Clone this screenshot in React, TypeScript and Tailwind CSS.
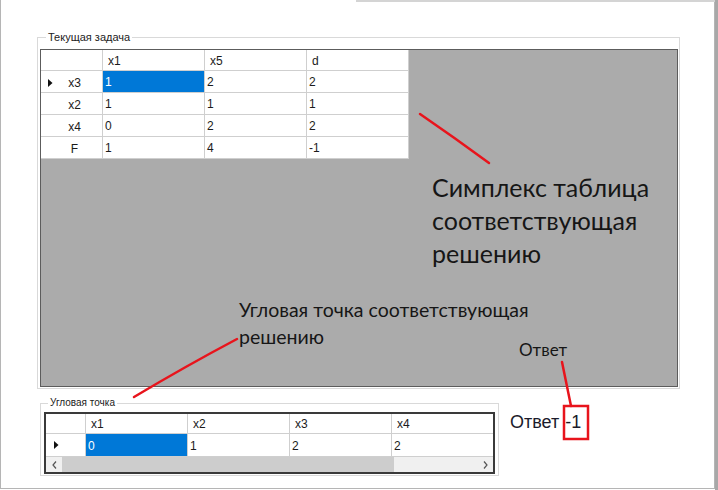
import React from "react"

const topCols = ["x1", "x5", "d"]
const topRows = [
  { name: "x3", vals: ["1", "2", "2"], current: true },
  { name: "x2", vals: ["1", "1", "1"] },
  { name: "x4", vals: ["0", "2", "2"] },
  { name: "F", vals: ["1", "4", "-1"] },
]

const pointCols = ["x1", "x2", "x3", "x4"]
const pointVals = ["0", "1", "2", "2"]

const line = "border-r border-b border-[#cfcfcf] bg-white"

function RowMark() {
  return (
    <svg width="5" height="8" viewBox="0 0 5 8">
      <path d="M0 0 L4.5 4 L0 8 Z" fill="#111" />
    </svg>
  )
}

export default function App() {
  return (
    <div className="relative flex w-[718px] h-[490px] bg-white overflow-hidden font-['Liberation_Sans',Arial,sans-serif] text-[#1b1b1b]">
      <div className="flex flex-col w-[715px] h-[489px] border-l border-r border-b border-[#b5b5b5]">
        <fieldset className="ml-[36px] mt-[31px] w-[643px] border border-[#d9d9d9] pb-[1px]">
          <legend className="ml-[8px] px-[2px] text-[11px] leading-[13px] text-[#222]">Текущая задача</legend>
          <div className="ml-[2px] mt-[5px] w-[638px] h-[338px] border border-[#5c5c5c] bg-[#ababab]">
            <div className="grid grid-cols-[62px_102px_102px_102px] grid-rows-[21px_22px_22px_22px_22px] w-[368px] text-[12px]">
              <div className={line} />
              {topCols.map((c) => (
                <div key={c} className={`${line} flex items-center pl-[5px] pt-[1px]`}>{c}</div>
              ))}
              {topRows.map((r) => (
                <React.Fragment key={r.name}>
                  <div className={`${line} relative flex items-center justify-center pt-[3px] pl-[6px]`}>
                    {r.current && (
                      <span className="absolute left-[7px] top-[8px]">
                        <RowMark />
                      </span>
                    )}
                    {r.name}
                  </div>
                  {r.vals.map((v, i) => (
                    <div
                      key={i}
                      className={`${line} flex items-center pl-[2px] pt-[1px] ${
                        r.current && i === 0 ? "!bg-[#0078d7] text-white" : ""
                      }`}
                    >
                      {v}
                    </div>
                  ))}
                </React.Fragment>
              ))}
            </div>
          </div>
        </fieldset>

        <div className="flex items-start">
          <fieldset className="ml-[39px] mt-[8px] w-[459px] border border-[#d9d9d9] pb-[1px]">
            <legend className="ml-[7px] px-[2px] text-[10px] leading-[12px] text-[#222]">Угловая точка</legend>
            <div className="ml-[3px] mt-[3px] w-[451px] h-[62px] border-2 border-[#3a3a3a] bg-white overflow-hidden flex flex-col">
              <div className="grid grid-cols-[40px_102px_102px_102px_102px] grid-rows-[20px_23px] w-[448px] text-[12px]">
                <div className={line} />
                {pointCols.map((c) => (
                  <div key={c} className={`${line} flex items-center pl-[5px] pt-[1px]`}>{c}</div>
                ))}
                <div className={`${line} flex items-center pl-[8px]`}>
                  <RowMark />
                </div>
                {pointVals.map((v, i) => (
                  <div
                    key={i}
                    className={`${line} flex items-center pl-[2px] pt-[1px] ${i === 0 ? "!bg-[#0078d7] text-white" : ""}`}
                  >
                    {v}
                  </div>
                ))}
              </div>
              <div className="flex items-center h-[15px] bg-[#f0f0f0]">
                <div className="w-[16px] flex justify-center">
                  <svg width="5" height="8" viewBox="0 0 5 8">
                    <path d="M4 0.5 L1 4 L4 7.5" fill="none" stroke="#555" strokeWidth="1.2" />
                  </svg>
                </div>
                <div className="w-[332px] h-full bg-[#cdcdcd]" />
                <div className="flex-1" />
                <div className="w-[16px] flex justify-center">
                  <svg width="5" height="8" viewBox="0 0 5 8">
                    <path d="M1 0.5 L4 4 L1 7.5" fill="none" stroke="#555" strokeWidth="1.2" />
                  </svg>
                </div>
              </div>
            </div>
          </fieldset>
          <div className="ml-[11px] mt-[23px] text-[18px] leading-[20px] text-[#1b1b2b] flex gap-[6px]">
            <span>Ответ</span>
            <span>-1</span>
          </div>
        </div>
      </div>
      <div className="flex-1 bg-[#a8a8a8]" />

      {/* annotation overlay */}
      <div className="absolute left-[356px] top-0 w-[359px] h-[2px] bg-[#d4d4d4]" />
      <svg className="absolute inset-0 pointer-events-none" width="718" height="490">
        <path d="M420 114 Q455 138 489 163" fill="none" stroke="#e8141c" strokeWidth="2.5" strokeLinecap="round" />
        <path d="M134 397 Q186 366 237 339" fill="none" stroke="#e8141c" strokeWidth="2.5" strokeLinecap="round" />
        <path d="M562 362 L571 406" fill="none" stroke="#e8141c" strokeWidth="2.5" strokeLinecap="round" />
        <rect x="564" y="406" width="24" height="33" fill="none" stroke="#e8141c" strokeWidth="2.5" />
      </svg>
      <div className="absolute left-[432px] top-[171px] font-['Lato',sans-serif] text-[25px] leading-[33px] text-[#161616]">
        Симплекс таблица
        <br />
        соответствующая
        <br />
        решению
      </div>
      <div className="absolute left-[239px] top-[296px] font-['Lato',sans-serif] text-[19.5px] leading-[27px] text-[#161616]">
        Угловая точка соответствующая
        <br />
        решению
      </div>
      <div className="absolute left-[519px] top-[340px] font-['Lato',sans-serif] text-[17px] leading-[20px] text-[#161616]">
        Ответ
      </div>
    </div>
  )
}
